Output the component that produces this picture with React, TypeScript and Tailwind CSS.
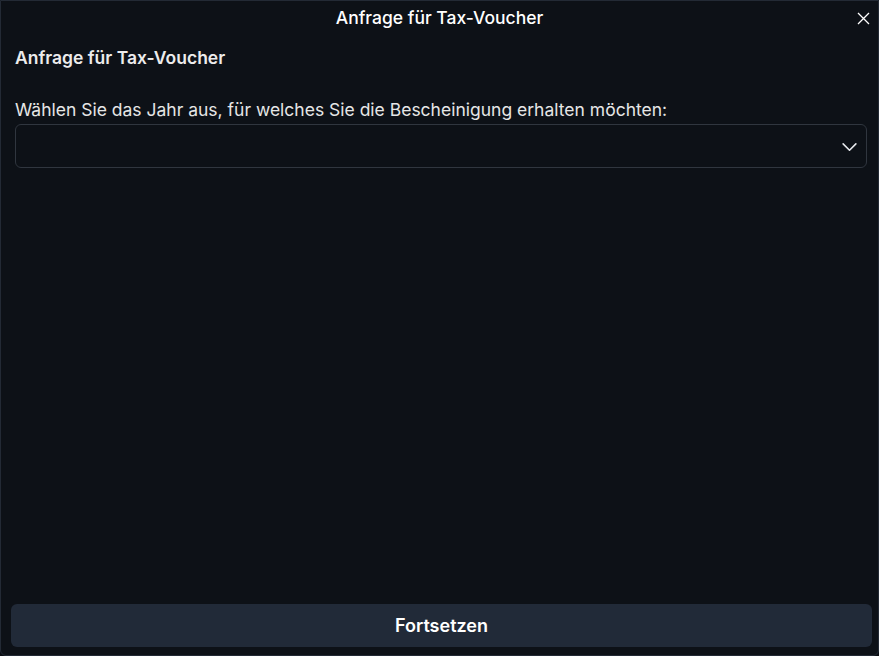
import React from "react";

export default function App() {
  return (
    <div
      className="w-[879px] h-[656px] bg-[#0b0e14] flex flex-col"
      style={{ fontFamily: "Inter, 'Noto Sans', sans-serif" }}
    >
      <div className="flex-1 flex flex-col bg-[#0d1117] border border-[#232a35] rounded-b-md overflow-hidden">
        <div className="relative h-[34px] flex items-center justify-center shrink-0">
          <span className="text-[17.5px] font-medium text-white">Anfrage für Tax-Voucher</span>
          <button className="absolute right-[7px] top-[9px] w-[16px] h-[16px] flex items-center justify-center text-white">
            <svg width="13" height="13" viewBox="0 0 13 13" fill="none" stroke="currentColor" strokeWidth="1.3">
              <path d="M1 1L12 12M12 1L1 12" />
            </svg>
          </button>
        </div>
        <div className="flex-1 flex flex-col pl-[14px] pr-[11px]">
          <h2 className="text-[17.5px] font-semibold text-[#ececec] mt-[11px] leading-[24px]">Anfrage für Tax-Voucher</h2>
          <label className="mt-[28px] text-[17.5px] text-[#e6e6e6] leading-[24px]">
            Wählen Sie das Jahr aus, für welches Sie die Bescheinigung erhalten möchten:
          </label>
          <div className="mt-[2px] h-[44px] border border-[#30363f] rounded-md flex items-center justify-end pr-[8px]">
            <svg width="17" height="17" viewBox="0 0 16 16" fill="none" stroke="#e5e7eb" strokeWidth="1.5" strokeLinecap="round" strokeLinejoin="round">
              <path d="M2 5.5L8 11.5L14 5.5" />
            </svg>
          </div>
          <div className="flex-1" />
        </div>
        <div className="pl-[10px] pr-[6px] pb-[8px]">
          <button className="w-full h-[43px] rounded-md bg-[#212a38] text-white text-[18px] font-semibold">
            Fortsetzen
          </button>
        </div>
      </div>
    </div>
  );
}
